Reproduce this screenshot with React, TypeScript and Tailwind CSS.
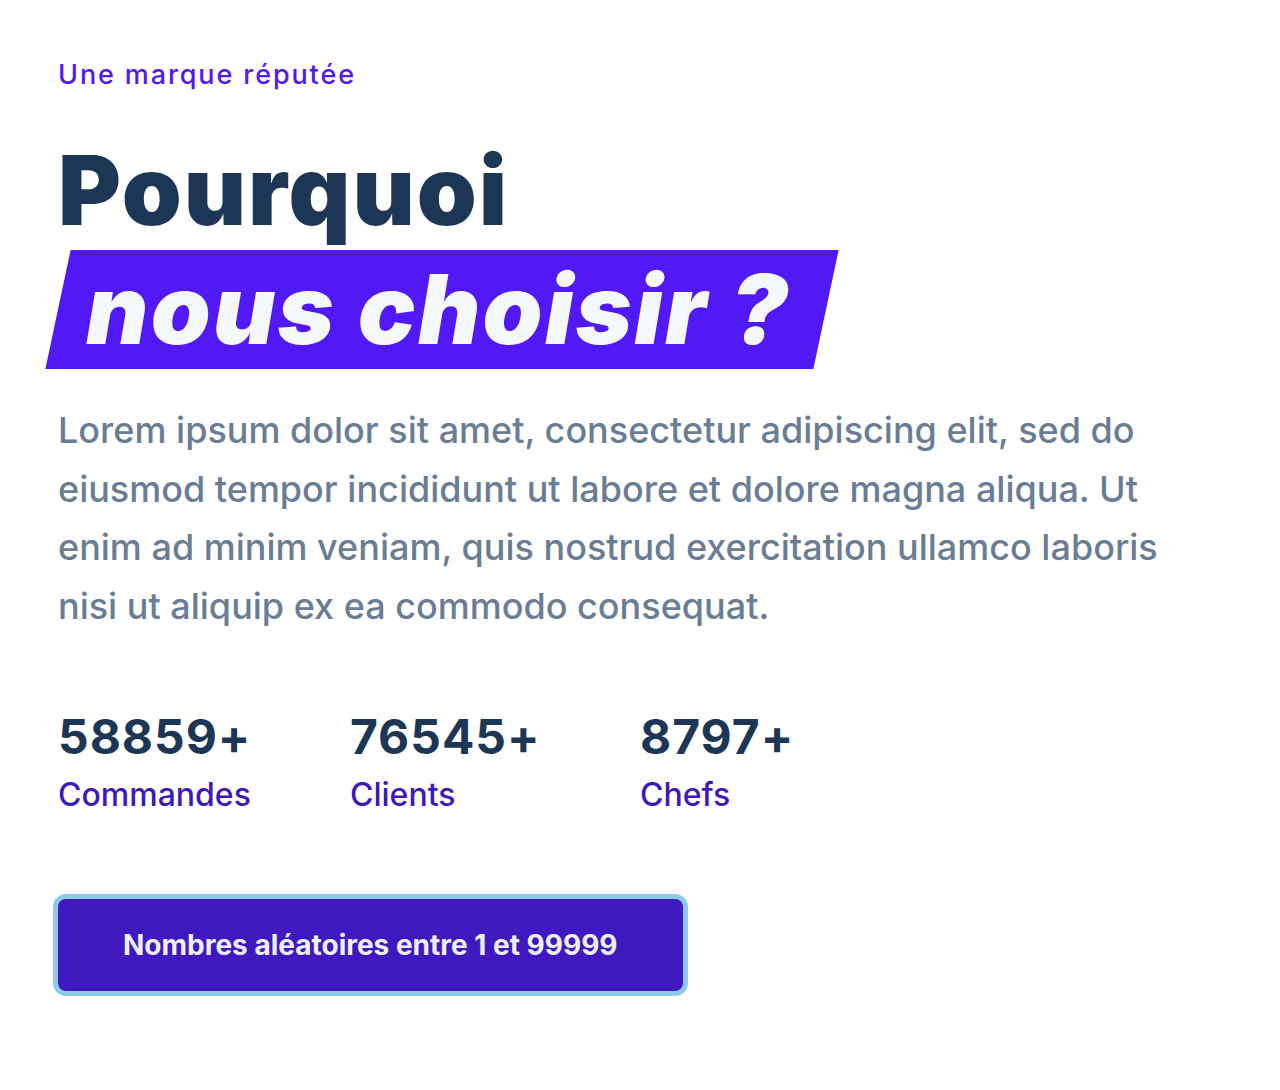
const stats = [
    { value: "58859+", label: "Commandes" },
    { value: "76545+", label: "Clients" },
    { value: "8797+", label: "Chefs" },
];

export default function App() {
    return (
        <section
            className="min-h-screen bg-white px-[58px] pt-[55px]"
            style={{ fontFamily: "Inter, 'Noto Sans', sans-serif" }}
        >
            <p className="text-[27px] leading-[39px] font-medium tracking-[0.07em] text-[#5019f6]">
                Une marque réputée
            </p>
            <h2 className="mt-12">
                <span className="block text-8xl leading-none font-black tracking-[0.02em] text-[#1e3655]">
                    Pourquoi
                </span>
                <span className="mt-3 inline-block -skew-x-12 bg-[#5019f6] pl-7 pr-9 pt-[11px] pb-[12px]">
                    <span className="inline-block skew-x-12 text-8xl leading-none font-black italic tracking-[0.024em] text-[#f5f8fb]">
                        nous choisir ?
                    </span>
                </span>
            </h2>
            <p className="mt-8 max-w-[1164px] text-4xl leading-relaxed font-medium text-[#6a7d93]">
                Lorem ipsum dolor sit amet, consectetur adipiscing elit, sed do
                eiusmod tempor incididunt ut labore et dolore magna aliqua. Ut
                enim ad minim veniam, quis nostrud exercitation ullamco laboris
                nisi ut aliquip ex ea commodo consequat.
            </p>
            <div className="mt-[78px] grid grid-cols-[292px_290px_auto]">
                {stats.map((stat) => (
                    <div key={stat.label}>
                        <div className="text-5xl leading-none font-bold tracking-[0.02em] text-[#1e3655]">
                            {stat.value}
                        </div>
                        <div className="mt-[10px] text-[32px] leading-[48px] font-medium text-[#3d18c0]">
                            {stat.label}
                        </div>
                    </div>
                ))}
            </div>
            <button
                type="button"
                className="mt-20 rounded-lg bg-[#3f19bf] px-[65px] py-6 text-[28px] leading-[44px] font-bold text-[#eef0ff] ring-[5px] ring-[#8ec8ea]"
            >
                Nombres aléatoires entre 1 et 99999
            </button>
        </section>
    );
}
